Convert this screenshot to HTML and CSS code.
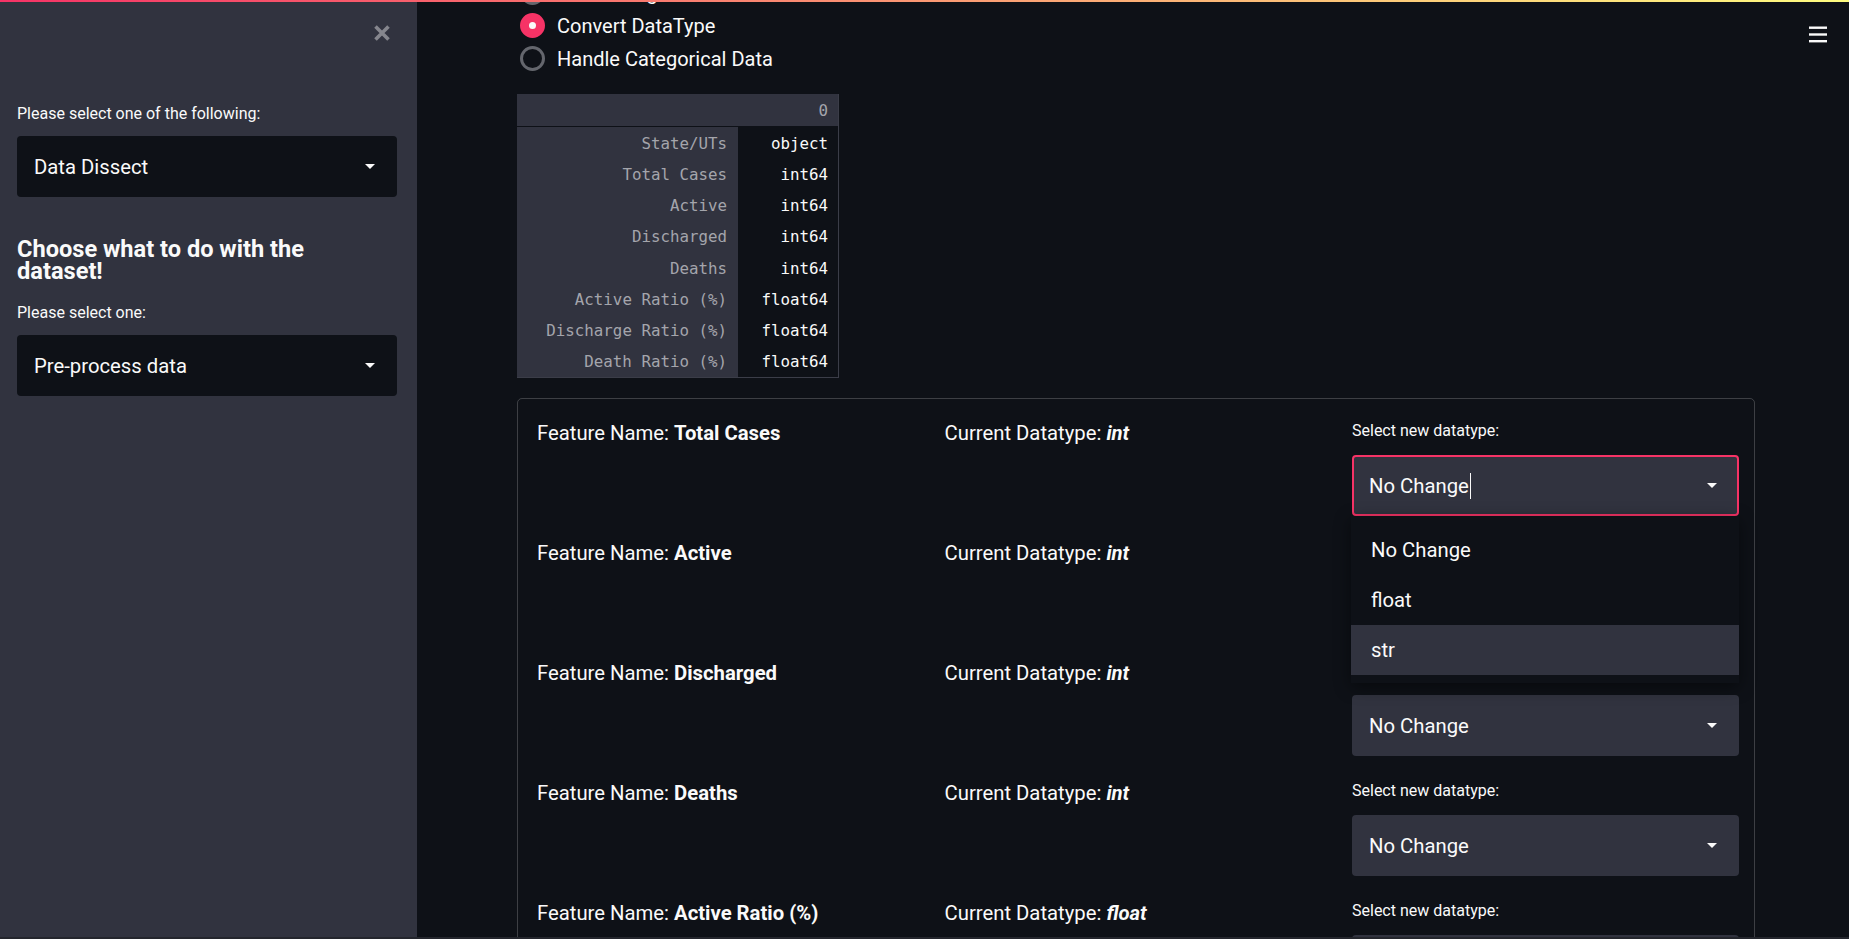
FILE: index.html
```html
<!DOCTYPE html>
<html lang="en">
<head>
<meta charset="utf-8">
<title>Data Dissect</title>
<link rel="stylesheet" href="styles.css">
</head>
<body>
<div class="decoration"></div>
<div class="app">
  <aside class="sidebar">
    <div class="sb-head">
      <button class="close-btn" aria-label="Close sidebar">
        <svg width="18" height="18" viewBox="0 0 18 18"><path d="M2.5 2.5 L15.5 15.5 M15.5 2.5 L2.5 15.5" stroke="currentColor" stroke-width="3.6" fill="none"/></svg>
      </button>
    </div>
    <label class="lbl">Please select one of the following:</label>
    <div class="select sb-select"><span class="val">Data Dissect</span><i class="caret"></i></div>
    <h3 class="sb-title">Choose what to do with the dataset!</h3>
    <label class="lbl lbl-2">Please select one:</label>
    <div class="select sb-select"><span class="val">Pre-process data</span><i class="caret"></i></div>
  </aside>

  <main class="main">
    <div class="radios">
      <div class="radio"><span class="dot"></span><span class="rtext">Fill Missing Values</span></div>
      <div class="radio"><span class="dot on"></span><span class="rtext">Convert DataType</span></div>
      <div class="radio"><span class="dot"></span><span class="rtext">Handle Categorical Data</span></div>
    </div>

    <div class="df">
      <div class="df-head"><span class="df-hcell"></span><span class="df-hcell num">0</span></div>
      <div class="df-row"><span class="idx">State/UTs</span><span class="cell">object</span></div>
      <div class="df-row"><span class="idx">Total Cases</span><span class="cell">int64</span></div>
      <div class="df-row"><span class="idx">Active</span><span class="cell">int64</span></div>
      <div class="df-row"><span class="idx">Discharged</span><span class="cell">int64</span></div>
      <div class="df-row"><span class="idx">Deaths</span><span class="cell">int64</span></div>
      <div class="df-row"><span class="idx">Active Ratio (%)</span><span class="cell">float64</span></div>
      <div class="df-row"><span class="idx">Discharge Ratio (%)</span><span class="cell">float64</span></div>
      <div class="df-row"><span class="idx">Death Ratio (%)</span><span class="cell">float64</span></div>
    </div>

    <div class="box">
      <div class="grid">
        <p class="feat">Feature Name: <b>Total Cases</b></p>
        <p class="feat">Current Datatype: <b><i>int</i></b></p>
        <div class="pick">
          <label class="lbl">Select new datatype:</label>
          <div class="select-wrap">
            <div class="select main-select focused"><span class="val">No Change</span><span class="cursor"></span><i class="caret"></i></div>
            <ul class="menu">
              <li>No Change</li>
              <li>float</li>
              <li class="hl">str</li>
            </ul>
          </div>
        </div>

        <p class="feat">Feature Name: <b>Active</b></p>
        <p class="feat">Current Datatype: <b><i>int</i></b></p>
        <div class="pick under-menu">
          <label class="lbl">Select new datatype:</label>
          <div class="select main-select"><span class="val">No Change</span><i class="caret"></i></div>
        </div>

        <p class="feat">Feature Name: <b>Discharged</b></p>
        <p class="feat">Current Datatype: <b><i>int</i></b></p>
        <div class="pick">
          <label class="lbl under-menu">Select new datatype:</label>
          <div class="select main-select"><span class="val">No Change</span><i class="caret"></i></div>
        </div>

        <p class="feat">Feature Name: <b>Deaths</b></p>
        <p class="feat">Current Datatype: <b><i>int</i></b></p>
        <div class="pick">
          <label class="lbl">Select new datatype:</label>
          <div class="select main-select"><span class="val">No Change</span><i class="caret"></i></div>
        </div>

        <p class="feat">Feature Name: <b>Active Ratio (%)</b></p>
        <p class="feat">Current Datatype: <b><i>float</i></b></p>
        <div class="pick">
          <label class="lbl">Select new datatype:</label>
          <div class="select main-select"><span class="val">No Change</span><i class="caret"></i></div>
        </div>

        <p class="feat">Feature Name: <b>Discharge Ratio (%)</b></p>
        <p class="feat">Current Datatype: <b><i>float</i></b></p>
        <div class="pick">
          <label class="lbl">Select new datatype:</label>
          <div class="select main-select"><span class="val">No Change</span><i class="caret"></i></div>
        </div>
      </div>
    </div>
  </main>
</div>
<button class="menu-btn" aria-label="Main menu">
  <svg width="18" height="17" viewBox="0 0 18 17"><rect x="0" y="0.5" width="18" height="2.4" fill="#fafafa"/><rect x="0" y="7.3" width="18" height="2.4" fill="#fafafa"/><rect x="0" y="14" width="18" height="2.4" fill="#fafafa"/></svg>
</button>
<div class="bottom-strip"></div>
</body>
</html>
```

FILE: styles.css
```css
* { box-sizing: border-box; }

html, body {
  margin: 0;
  padding: 0;
  height: 100%;
  overflow: hidden;
  background: #0e1117;
  color: #fafafa;
  font-family: Roboto, "Noto Sans", "Liberation Sans", sans-serif;
}

.decoration {
  position: fixed;
  top: 0;
  left: 0;
  right: 0;
  height: 2px;
  background: linear-gradient(90deg, #f63366, #fffd80);
  z-index: 100;
}

.app {
  display: flex;
  height: 100vh;
}

/* ---------- Sidebar ---------- */
.sidebar {
  width: 417px;
  flex-shrink: 0;
  background: #31333f;
  padding: 0 20px 0 17px;
  display: flex;
  flex-direction: column;
}

.sb-head {
  height: 102px;
  display: flex;
  justify-content: flex-end;
  align-items: flex-start;
  padding-top: 24px;
}

.close-btn {
  border: 0;
  background: none;
  padding: 0;
  margin-right: 6px;
  color: #85868d;
  display: flex;
}

.lbl {
  display: block;
  font-size: 16px;
  line-height: 24px;
  color: #fafafa;
}

.lbl-2 { margin-top: 19px; }

.select {
  height: 61px;
  display: flex;
  align-items: center;
  border: 1px solid transparent;
  border-radius: 4px;
  padding: 0 21px 0 16px;
  font-size: 20.3px;
  color: #fafafa;
}

.sb-select {
  background: #0e1117;
  margin-top: 10px;
}

.caret {
  margin-left: auto;
  width: 0;
  height: 0;
  border-left: 5px solid transparent;
  border-right: 5px solid transparent;
  border-top: 5px solid #fafafa;
}

.sb-title {
  margin: 41px 0 0;
  font-size: 23.6px;
  line-height: 22px;
  font-weight: 700;
  max-width: 330px;
}

/* ---------- Main ---------- */
.main {
  flex: 1;
  min-width: 0;
  padding: 0 94px 0 100px;
}

.radios {
  margin-top: -24px;
  display: flex;
  flex-direction: column;
}

.radio {
  height: 33px;
  display: flex;
  align-items: center;
  gap: 12px;
  padding-left: 3px;
  font-size: 20px;
}

.dot {
  width: 25px;
  height: 25px;
  border-radius: 50%;
  border: 3px solid #64666d;
  background: #0e1117;
  flex-shrink: 0;
  display: flex;
  align-items: center;
  justify-content: center;
}

.dot.on {
  border-color: #f63366;
  background: #f63366;
}

.dot.on::after {
  content: "";
  width: 7px;
  height: 7px;
  border-radius: 50%;
  background: #fafafa;
}

/* dataframe */
.df {
  margin-top: 19px;
  width: 322px;
  border-right: 1px solid #3b3d48;
  border-bottom: 1px solid #3b3d48;
  font-family: "DejaVu Sans Mono", "Liberation Mono", monospace;
  font-size: 15.8px;
}

.df-head {
  height: 33px;
  background: #31333f;
  border-bottom: 1px solid #0e1117;
  display: grid;
  grid-template-columns: 221px 1fr;
}

.df-hcell {
  display: flex;
  align-items: center;
  justify-content: flex-end;
  padding-right: 10px;
  color: #a4a5ac;
}

.df-row {
  height: 31.25px;
  display: grid;
  grid-template-columns: 221px 1fr;
}

.idx, .cell {
  display: flex;
  align-items: center;
  justify-content: flex-end;
  padding-top: 1px;
}

.idx {
  background: #31333f;
  color: #a4a5ac;
  padding-right: 11px;
}

.cell {
  color: #fafafa;
  padding-right: 10px;
}

/* bordered box */
.box {
  margin-top: 20px;
  border: 1px solid rgba(250, 250, 250, 0.2);
  border-radius: 5px;
  padding: 20px 15px 40px 19px;
}

.grid {
  display: grid;
  grid-template-columns: repeat(3, 1fr);
  column-gap: 20.5px;
  row-gap: 23px;
}

.feat {
  margin: 0;
  font-size: 20.3px;
  line-height: 28px;
}

.feat b { font-weight: 700; }

.pick { display: flex; flex-direction: column; }

.select-wrap {
  position: relative;
  margin-top: 12px;
}

.main-select {
  background: #31333f;
}

.pick > .main-select { margin-top: 12px; }

.main-select.focused {
  border: 2px solid #f63366;
  padding: 0 20px 0 15px;
}

.cursor {
  width: 1.5px;
  height: 26px;
  background: #fafafa;
  margin-left: 1px;
}

.menu {
  position: absolute;
  top: 61px;
  left: -1px;
  right: 0;
  margin: 0;
  padding: 9px 0 8px;
  list-style: none;
  background: #0e1117;
  box-shadow: 0 4px 16px rgba(0, 0, 0, 0.45);
  z-index: 20;
}

.menu li {
  height: 50px;
  line-height: 50px;
  padding-left: 20px;
  font-size: 20.3px;
  color: #fafafa;
}

.menu li.hl { background: #31333f; }

.under-menu { visibility: hidden; }

.menu-btn {
  position: fixed;
  top: 26px;
  right: 22px;
  border: 0;
  padding: 0;
  background: none;
  display: flex;
}

.bottom-strip {
  position: fixed;
  left: 0;
  right: 0;
  bottom: 0;
  height: 2px;
  background: #24262d;
}
```
